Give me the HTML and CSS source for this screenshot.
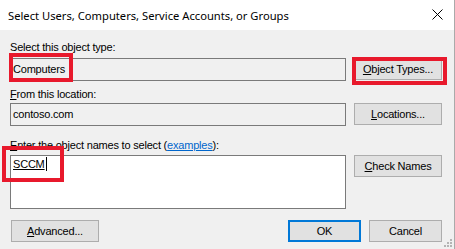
FILE: index.html
```html
<!DOCTYPE html>
<html lang="en">
<head>
  <meta charset="UTF-8" />
  <title>Select Users, Computers, Service Accounts, or Groups</title>
  <link rel="stylesheet" href="styles.css">
</head>
<body>
  <div class="dialog">
    <div class="titlebar">
      <span class="title">Select Users, Computers, Service Accounts, or Groups</span>
      <svg class="close" width="11" height="11" viewBox="0 0 11 11">
        <path d="M0.5 0.5 L10.5 10.5 M10.5 0.5 L0.5 10.5" stroke="#000" stroke-width="1" fill="none" />
      </svg>
    </div>

    <div class="content">
      <div class="label label-type">Select this object type:</div>
      <div class="row row-type">
        <div class="field">Computers</div>
        <button class="btn"><u>O</u>bject Types...</button>
      </div>

      <div class="label label-loc"><u>F</u>rom this location:</div>
      <div class="row row-loc">
        <div class="field">contoso.com</div>
        <button class="btn"><u>L</u>ocations...</button>
      </div>

      <div class="label label-names"><u>E</u>nter the object names to select (<a href="#">examples</a>):</div>
      <div class="row row-names">
        <div class="names"><span class="resolved">SCCM</span><span class="caret"></span></div>
        <button class="btn"><u>C</u>heck Names</button>
      </div>

      <div class="footer">
        <button class="btn"><u>A</u>dvanced...</button>
        <div class="actions">
          <button class="btn small default">OK</button>
          <button class="btn small">Cancel</button>
        </div>
      </div>
    </div>

    <!-- annotations -->
    <div class="mark mark-type"></div>
    <div class="mark mark-btn"></div>
    <div class="mark mark-name"></div>

    <svg class="grip" width="8" height="8" viewBox="0 0 8 8">
      <rect x="6" y="0" width="2" height="2" fill="#b4b4b4" />
      <rect x="3" y="3" width="2" height="2" fill="#b4b4b4" />
      <rect x="6" y="3" width="2" height="2" fill="#b4b4b4" />
      <rect x="0" y="6" width="2" height="2" fill="#b4b4b4" />
      <rect x="3" y="6" width="2" height="2" fill="#b4b4b4" />
      <rect x="6" y="6" width="2" height="2" fill="#b4b4b4" />
    </svg>
  </div>
</body>
</html>
```

FILE: styles.css
```css
* {
  box-sizing: border-box;
}

body {
  margin: 0;
  font-family: 'Liberation Sans', Arial, sans-serif;
  font-size: 11px;
  letter-spacing: -0.2px;
  color: #000;
}

.dialog {
  position: relative;
  width: 455px;
  height: 249px;
  background: #f0f0f0;
  border-right: 1px solid #aaa;
  overflow: hidden;
}

/* Barre de titre */
.titlebar {
  height: 30px;
  background: #fff;
  display: flex;
  align-items: center;
  justify-content: space-between;
  padding: 0 11px 0 8px;
}

.title {
  font-family: 'Noto Sans', sans-serif;
  font-size: 11.2px;
  letter-spacing: 0;
  color: #000;
}

.close {
  margin-top: -1px;
}

/* Contenu */
.content {
  padding: 11px 12px 0 10px;
  display: flex;
  flex-direction: column;
}

.label {
  line-height: 13px;
  height: 13px;
}

.label-type {
  margin-bottom: 4px;
}

.label-loc {
  margin-bottom: 2px;
}

.label-names {
  margin-bottom: 3px;
}

.label a {
  color: #0066cc;
}

.row {
  display: grid;
  grid-template-columns: 336px 88px;
  column-gap: 8px;
  align-items: start;
}

.row-type {
  margin-bottom: 7px;
}

.row-loc {
  margin-bottom: 13px;
}

.row-names {
  margin-bottom: 11px;
}

.field {
  height: 23px;
  border: 1px solid #7a7a7a;
  background: #f0f0f0;
  padding: 0 2px;
  line-height: 21px;
}

.names {
  height: 54px;
  border: 1px solid #7a7a7a;
  background: #fff;
  padding: 1px 2px;
  line-height: 14px;
  display: flex;
  align-items: flex-start;
}

.resolved {
  text-decoration: underline;
}

.caret {
  width: 1px;
  height: 14px;
  background: #000;
  margin-left: 1px;
}

.btn {
  font-family: inherit;
  font-size: 11px;
  letter-spacing: -0.2px;
  color: #000;
  width: 88px;
  height: 22px;
  background: #e1e1e1;
  border: 1px solid #adadad;
  padding: 0;
  margin: 0;
}

.btn.small {
  width: 73px;
}

.btn.default {
  border: 2px solid #0078d7;
}

.footer {
  display: flex;
  justify-content: space-between;
  align-items: center;
  padding-left: 1px;
}

.actions {
  display: flex;
  gap: 8px;
}

/* Cadres rouges */
.mark {
  position: absolute;
  border: 4px solid #e8192c;
}

.mark-type {
  left: 9px;
  top: 53px;
  width: 64px;
  height: 29px;
}

.mark-btn {
  left: 352px;
  top: 57px;
  width: 95px;
  height: 28px;
}

.mark-name {
  left: 2px;
  top: 146px;
  width: 62px;
  height: 36px;
}

.grip {
  position: absolute;
  right: 2px;
  bottom: 2px;
}
```
